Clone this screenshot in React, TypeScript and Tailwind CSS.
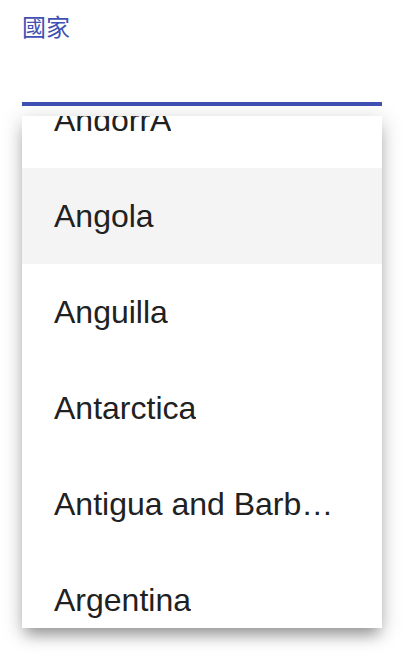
import React from "react";

const items = ["AndorrA", "Angola", "Anguilla", "Antarctica", "Antigua and Barbuda", "Argentina"];

export default function App() {
  return (
    <div
      className="w-[412px] h-[654px] bg-white overflow-hidden"
      style={{ fontFamily: '"Liberation Sans", Arial, "Noto Sans CJK TC", sans-serif' }}
    >
      <div className="pl-[22px] pt-[12px] w-[382px]">
        <div className="text-[24px] leading-[28px] text-[#3f51b5] h-[28px]" style={{ fontFamily: '"Noto Sans CJK TC", sans-serif' }}>
          國家
        </div>
        <div className="h-[62px]" />
        <div className="h-[4px] bg-[#3f51b5]" />
        <div className="h-[10px]" />
        <div className="h-[512px] bg-white overflow-hidden shadow-[0_10px_14px_-4px_rgba(0,0,0,0.35),0_4px_20px_2px_rgba(0,0,0,0.15)]">
          <div className="-mt-[44px]">
            {items.map((it) => (
              <div
                key={it}
                className={`h-[96px] flex items-center pl-[32px] pr-[40px] text-[32px] text-[#212121] ${it === "Angola" ? "bg-[#f4f4f4]" : ""}`}
              >
                <span className="block whitespace-nowrap overflow-hidden text-ellipsis">{it}</span>
              </div>
            ))}
          </div>
        </div>
      </div>
    </div>
  );
}
